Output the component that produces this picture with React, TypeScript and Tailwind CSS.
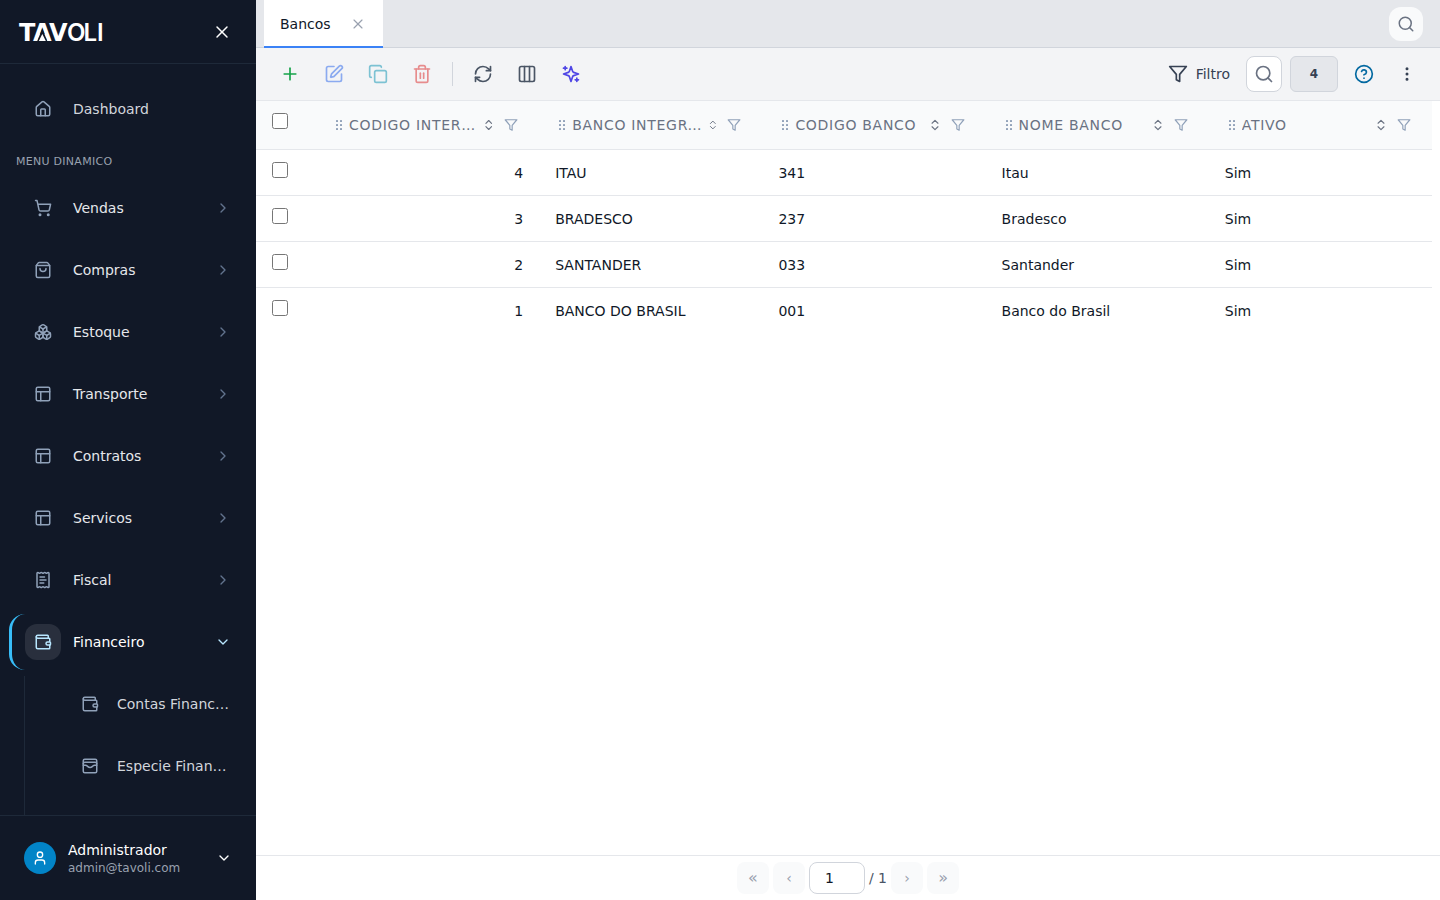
import React from "react";
import {
  Boxes,
  ChevronDown,
  ChevronRight,
  ChevronsUpDown,
  CircleHelp,
  Columns3,
  Copy,
  EllipsisVertical,
  House,
  PanelsTopLeft,
  Plus,
  ReceiptText,
  RefreshCw,
  Search,
  ShoppingBag,
  ShoppingCart,
  SquarePen,
  Trash2,
  User,
  Wallet,
  WalletCards,
  X,
  type LucideIcon,
} from "lucide-react";

const menu: { label: string; icon: LucideIcon }[] = [
  { label: "Vendas", icon: ShoppingCart },
  { label: "Compras", icon: ShoppingBag },
  { label: "Estoque", icon: Boxes },
  { label: "Transporte", icon: PanelsTopLeft },
  { label: "Contratos", icon: PanelsTopLeft },
  { label: "Servicos", icon: PanelsTopLeft },
  { label: "Fiscal", icon: ReceiptText },
];

const submenu: { label: string; icon: LucideIcon }[] = [
  { label: "Contas Financeiras", icon: Wallet },
  { label: "Especie Financeira", icon: WalletCards },
];

const columns = ["Codigo Interno", "Banco Integracao", "Codigo Banco", "Nome Banco", "Ativo"];

const rows = [
  ["4", "ITAU", "341", "Itau", "Sim"],
  ["3", "BRADESCO", "237", "Bradesco", "Sim"],
  ["2", "SANTANDER", "033", "Santander", "Sim"],
  ["1", "BANCO DO BRASIL", "001", "Banco do Brasil", "Sim"],
];

function Funnel({ className }: { className?: string }) {
  return (
    <svg viewBox="0 0 24 24" fill="none" stroke="currentColor" strokeWidth="2" strokeLinecap="round" strokeLinejoin="round" className={className} aria-hidden="true">
      <path d="M22 3H2l8 9.46V19l4 2v-8.54L22 3z" />
    </svg>
  );
}

function SparkleIcon() {
  return (
    <svg viewBox="0 0 24 24" fill="none" stroke="currentColor" strokeWidth="2" strokeLinecap="round" strokeLinejoin="round" className="size-5" aria-hidden="true">
      <path d="m12 3-1.9 5.8a2 2 0 0 1-1.3 1.3L3 12l5.8 1.9a2 2 0 0 1 1.3 1.3L12 21l1.9-5.8a2 2 0 0 1 1.3-1.3L21 12l-5.8-1.9a2 2 0 0 1-1.3-1.3L12 3Z" />
      <path d="M5 3v4M3 5h4M19 17v4M17 19h4" />
    </svg>
  );
}

function Grip() {
  return (
    <svg viewBox="0 0 12 12" fill="currentColor" className="size-3 shrink-0 text-slate-400" aria-hidden="true">
      {[1, 5, 9].map((y) => (
        <g key={y}>
          <rect x="4" y={y} width="2" height="2" rx="0.5" />
          <rect x="8" y={y} width="2" height="2" rx="0.5" />
        </g>
      ))}
    </svg>
  );
}

function Logo() {
  return (
    <svg viewBox="0 0 84 32" className="h-8 w-21 overflow-visible" role="img" aria-label="Tavoli">
      <text y="25" fill="#fff" fontFamily="'DejaVu Sans', sans-serif" fontWeight="700" fontSize="24">
        <tspan x="2 16 32">TAV</tspan>
        <tspan x="50 66.500 80" fontFamily="Inter, sans-serif" fontWeight="600">OLI</tspan>
      </text>
      <path d="M25.300 12.500l5.200 13.200H20z" fill="#111827" />
      <path d="M25.300 18l3.500 7h-7z" fill="#fff" />
    </svg>
  );
}

function IconButton({ label, className, children, disabled }: { label: string; className: string; children: React.ReactNode; disabled?: boolean }) {
  return (
    <button type="button" aria-label={label} disabled={disabled} className={`flex size-9 items-center justify-center rounded-lg ${className}`}>
      {children}
    </button>
  );
}

function Sidebar() {
  return (
    <aside className="flex w-64 shrink-0 flex-col bg-[#111827]">
      <div className="flex h-16 shrink-0 items-center justify-between border-b border-gray-800 pr-6 pl-[17px]">
        <Logo />
        <button type="button" aria-label="Fechar menu" className="text-white">
          <X className="size-5" strokeWidth={1.75} />
        </button>
      </div>

      <nav className="min-h-0 flex-1 overflow-hidden px-[9px] pt-[17px] text-sm">
        <a href="#dashboard" className="flex h-14 items-center gap-3 pl-4 text-gray-300">
          <span className="flex size-9 items-center justify-center text-slate-400">
            <House className="size-[18px]" />
          </span>
          Dashboard
        </a>
        <p className="px-[7px] pt-[17px] pb-2.5 text-[11px] leading-4 tracking-wide text-gray-400 uppercase">Menu Dinamico</p>
        <ul className="flex flex-col gap-1.5">
          {menu.map(({ label, icon: Icon }) => (
            <li key={label}>
              <button type="button" className="flex h-14 w-full items-center gap-3 px-4 text-left text-gray-200">
                <span className="flex size-9 items-center justify-center text-slate-400">
                  <Icon className="size-[18px]" />
                </span>
                <span className="flex-1">{label}</span>
                <ChevronRight className="size-4 text-slate-500" />
              </button>
            </li>
          ))}
          <li>
            <button type="button" aria-expanded="true" className="flex h-14 w-full items-center gap-3 rounded-2xl border-l-3 border-[#38bdf8] pr-4 pl-[13px] text-left text-white">
              <span className="flex size-9 items-center justify-center rounded-xl bg-white/10 text-sky-200">
                <Wallet className="size-[18px]" />
              </span>
              <span className="flex-1">Financeiro</span>
              <ChevronDown className="size-4 text-sky-200" />
            </button>
            <ul className="mt-1.5 ml-[15px] flex flex-col gap-1.5 border-l border-gray-800 pb-8">
              {submenu.map(({ label, icon: Icon }) => (
                <li key={label}>
                  <a href="#financeiro" className="flex h-14 items-center gap-[9px] pr-[17px] pl-[47px] text-gray-300">
                    <span className="flex size-9 shrink-0 items-center justify-center text-slate-400">
                      <Icon className="size-[18px]" />
                    </span>
                    <span className="truncate">{label}</span>
                  </a>
                </li>
              ))}
            </ul>
          </li>
        </ul>
      </nav>

      <div className="shrink-0 border-t border-gray-800 px-2 py-[18px]">
        <button type="button" className="flex w-full items-center gap-3 px-4 py-1.5 text-left">
          <span className="flex size-8 items-center justify-center rounded-full bg-[#0284c7] text-white">
            <User className="size-4" />
          </span>
          <span className="flex flex-1 flex-col">
            <span className="text-sm leading-5 text-white">Administrador</span>
            <span className="text-xs leading-4 text-gray-400">admin@tavoli.com</span>
          </span>
          <ChevronDown className="size-4 text-white" />
        </button>
      </div>
    </aside>
  );
}

function Toolbar() {
  return (
    <div className="flex h-[53px] shrink-0 items-center justify-between border-b border-gray-200 bg-gray-100 px-4">
      <div className="flex items-center gap-2">
        <IconButton label="Novo" className="text-[#16a34a]"><Plus className="size-5" /></IconButton>
        <IconButton label="Editar" disabled className="text-[#2563eb] opacity-50"><SquarePen className="size-5" /></IconButton>
        <IconButton label="Duplicar" disabled className="text-[#0891b2] opacity-50"><Copy className="size-5" /></IconButton>
        <IconButton label="Excluir" disabled className="text-[#dc2626] opacity-50"><Trash2 className="size-5" /></IconButton>
        <div className="mx-1 h-6 w-px bg-gray-300" />
        <IconButton label="Atualizar" className="text-gray-600"><RefreshCw className="size-5" /></IconButton>
        <IconButton label="Colunas" className="text-gray-600"><Columns3 className="size-5" /></IconButton>
        <IconButton label="Assistente" className="text-[#4f46e5]"><SparkleIcon /></IconButton>
      </div>
      <div className="flex items-center gap-2">
        <button type="button" className="flex h-9 items-center gap-2 px-2 text-sm text-gray-700">
          <Funnel className="size-5" />
          Filtro
        </button>
        <IconButton label="Pesquisar" className="border border-gray-300 bg-white text-gray-500"><Search className="size-5" /></IconButton>
        <button type="button" className="h-9 w-12 rounded-md border border-gray-300 bg-gray-200 text-xs font-bold text-gray-700">4</button>
        <IconButton label="Ajuda" className="text-[#0369a1]"><CircleHelp className="size-5" /></IconButton>
        <button type="button" aria-label="Mais opções" className="flex h-9 w-[34px] items-center justify-center rounded-lg text-gray-700">
          <EllipsisVertical className="size-[18px]" />
        </button>
      </div>
    </div>
  );
}

function BankTable() {
  return (
    <div className="min-h-0 flex-1 overflow-auto pr-2">
      <table className="w-full table-fixed border-collapse text-sm">
        <thead>
          <tr className="border-b border-gray-200 bg-gray-50">
            <th className="h-12 w-15 px-4 pb-0.5 text-left font-normal">
              <input type="checkbox" aria-label="Selecionar todos" className="size-4" />
            </th>
            {columns.map((name) => (
              <th key={name} scope="col" className="px-4 text-left font-normal text-gray-500">
                <div className="flex items-center">
                  <Grip />
                  <span className="ml-[5px] min-w-0 grow truncate tracking-wider uppercase">{name}</span>
                  <button type="button" aria-label={`Ordenar por ${name}`} className="ml-[3px] flex min-w-0 shrink">
                    <ChevronsUpDown className="h-3.5 w-3.5 min-w-0 shrink" />
                  </button>
                  <button type="button" aria-label={`Filtrar ${name}`} className="ml-[3px] flex shrink-0 py-1.5 pr-[5px] pl-1.5 text-slate-400">
                    <Funnel className="size-3.5" />
                  </button>
                </div>
              </th>
            ))}
          </tr>
        </thead>
        <tbody className="text-gray-900">
          {rows.map((row) => (
            <tr key={row[0]} className="border-b border-gray-200 last:border-b-0">
              <td className="h-[46px] px-4">
                <input type="checkbox" aria-label={`Selecionar ${row[1]}`} className="size-4" />
              </td>
              {row.map((value, i) => (
                <td key={columns[i]} className={i === 0 ? "px-4 pt-0.5 text-right" : "px-4 pt-0.5"}>{value}</td>
              ))}
            </tr>
          ))}
        </tbody>
      </table>
    </div>
  );
}

function Pagination() {
  const button = "size-8 rounded-lg bg-gray-50 text-gray-400";
  return (
    <footer className="flex h-[45px] shrink-0 items-center justify-center gap-1 border-t border-gray-200 text-sm">
      <button type="button" aria-label="Primeira página" disabled className={`${button} text-base`}>«</button>
      <button type="button" aria-label="Página anterior" disabled className={button}>‹</button>
      <input aria-label="Página" defaultValue="1" className="h-8 w-14 rounded-lg border border-gray-300 bg-white pr-6 pl-[15px] text-gray-900" />
      <span className="text-gray-600">/ 1</span>
      <button type="button" aria-label="Próxima página" disabled className={button}>›</button>
      <button type="button" aria-label="Última página" disabled className={`${button} text-base`}>»</button>
    </footer>
  );
}

export default function App() {
  return (
    <div className="flex h-screen bg-white font-['DejaVu_Sans',sans-serif]">
      <Sidebar />
      <main className="flex min-w-0 flex-1 flex-col">
        <div className="flex h-12 shrink-0 items-center justify-between border-b border-gray-300 bg-gray-200 pr-[17px] pl-2">
          <div className="-mb-px flex h-12 items-center gap-[15px] self-start border-b-2 border-[#3b82f6] bg-white pt-0.5 pr-[13px] pl-4 text-sm text-gray-900">
            <span>Bancos</span>
            <button type="button" aria-label="Fechar aba" className="flex size-6 items-center justify-center text-gray-400">
              <X className="size-4" strokeWidth={1.75} />
            </button>
          </div>
          <button type="button" aria-label="Buscar" className="flex size-[34px] items-center justify-center rounded-xl bg-gray-50 text-gray-500">
            <Search className="size-[18px]" />
          </button>
        </div>
        <Toolbar />
        <BankTable />
        <Pagination />
      </main>
    </div>
  );
}
